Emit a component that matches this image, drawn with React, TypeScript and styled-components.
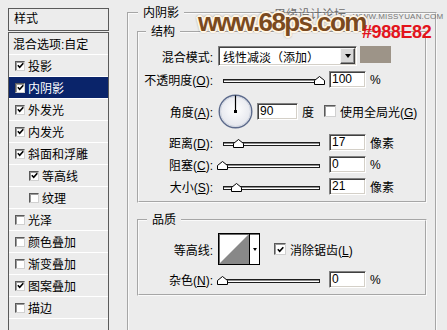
import styled, { createGlobalStyle } from 'styled-components';

const GlobalStyle = createGlobalStyle`
  html, body {
    margin: 0;
    padding: 0;
    background: #ececec;
  }
  body {
    font-family: 'Liberation Sans', 'Noto Sans CJK SC', sans-serif;
    font-size: 12px;
    color: #000;
  }
`;

const Page = styled.div`
  position: relative;
  display: flex;
  align-items: flex-start;
  width: 447px;
  height: 330px;
  overflow: hidden;
  background: #ececec;
`;

/* ---------- left: style list ---------- */

const Sidebar = styled.div`
  display: flex;
  flex-direction: column;
  flex-shrink: 0;
  width: 101px;
  margin: 8px 0 0 8px;
`;

const TitleBox = styled.div`
  box-sizing: border-box;
  height: 23px;
  margin-bottom: 1px;
  padding-left: 5px;
  border: 1px solid #5a5a5a;
  line-height: 21px;
`;

const StyleList = styled.div`
  box-sizing: border-box;
  height: 310px;
  border: 1px solid #5a5a5a;
  border-bottom: none;
`;

const StyleRow = styled.div<{ $indent: number; $active?: boolean }>`
  box-sizing: border-box;
  display: flex;
  align-items: center;
  gap: 3px;
  height: 22px;
  padding-left: ${(p) => p.$indent}px;
  border-bottom: 1px solid #fff;
  background: ${(p) => (p.$active ? '#0a246a' : 'transparent')};
  color: ${(p) => (p.$active ? '#fff' : '#000')};
  white-space: nowrap;
`;

const Box = styled.span<{ $size: number }>`
  box-sizing: border-box;
  display: inline-flex;
  align-items: center;
  justify-content: center;
  flex-shrink: 0;
  width: ${(p) => p.$size}px;
  height: ${(p) => p.$size}px;
  background: #fff;
  border: 1px solid;
  border-color: #5a5a5a #d0d0d0 #d0d0d0 #5a5a5a;
  box-shadow: inset 1px 1px 0 #9a9a9a;
`;

function Check({ checked, size = 10 }: { checked?: boolean; size?: number }) {
  return (
    <Box $size={size}>
      {checked && (
        <svg width={7} height={7} viewBox="0 0 7 7">
          <path d="M0.8 3.2 L2.7 5.2 L6.3 1.2" stroke="#000" strokeWidth="1.6" fill="none" />
        </svg>
      )}
    </Box>
  );
}

const styles = [
  { label: '混合选项:自定', plain: true },
  { label: '投影', checked: true },
  { label: '内阴影', checked: true, active: true },
  { label: '外发光', checked: true },
  { label: '内发光', checked: true },
  { label: '斜面和浮雕', checked: true },
  { label: '等高线', checked: true, sub: true },
  { label: '纹理', sub: true },
  { label: '光泽' },
  { label: '颜色叠加' },
  { label: '渐变叠加' },
  { label: '图案叠加', checked: true },
  { label: '描边' },
];

/* ---------- right: options ---------- */

const OuterGroup = styled.fieldset`
  box-sizing: border-box;
  flex-shrink: 0;
  width: 310px;
  height: 340px;
  min-width: 0;
  margin: 6px 0 0 18px;
  padding: 5px 0 0 8px;
  border: 2px groove #fafafa;
`;

const Legend = styled.legend<{ $offset: number }>`
  margin-left: ${(p) => p.$offset}px;
  padding: 0 5px;
  line-height: 14px;
  font-size: 12px;
`;

const Group = styled.fieldset<{ $top?: number }>`
  box-sizing: border-box;
  width: 290px;
  min-width: 0;
  margin: ${(p) => p.$top || 0}px 0 0 0;
  padding: 0;
  border: 2px groove #fafafa;
`;

const Stack = styled.div<{ $gap: number; $pt: number; $pb: number }>`
  display: flex;
  flex-direction: column;
  gap: ${(p) => p.$gap}px;
  padding: ${(p) => p.$pt}px 0 ${(p) => p.$pb}px 0;
`;

const Row = styled.div<{ $h: number }>`
  display: flex;
  align-items: center;
  height: ${(p) => p.$h}px;
  white-space: nowrap;
`;

const Label = styled.span`
  flex-shrink: 0;
  width: 74px;
  margin-right: 5px;
  text-align: right;
`;

const Select = styled.div`
  box-sizing: border-box;
  display: flex;
  align-items: center;
  flex-shrink: 0;
  width: 139px;
  height: 20px;
  padding: 1px 1px 1px 4px;
  background: #fff;
  border: 1px solid;
  border-color: #808080 #fff #fff #808080;
  box-shadow: inset 1px 1px 0 #404040, inset -1px -1px 0 #d4d0c8;
`;

const SelectText = styled.span`
  flex: 1;
`;

const SelectButton = styled.span`
  box-sizing: border-box;
  display: flex;
  align-items: center;
  justify-content: center;
  width: 15px;
  height: 16px;
  background: #d8d8d8;
  border: 1px solid;
  border-color: #f6f6f6 #404040 #404040 #f6f6f6;
  box-shadow: inset -1px -1px 0 #8a8a8a;
  &::after {
    content: '';
    border-left: 3.5px solid transparent;
    border-right: 3.5px solid transparent;
    border-top: 4px solid #000;
  }
`;

const Swatch = styled.div`
  align-self: flex-start;
  width: 31px;
  height: 17px;
  margin-left: 3px;
  background: #9d9488;
`;

const SliderWrap = styled.div`
  position: relative;
  flex-shrink: 0;
  width: 97px;
  height: 17px;
  margin-left: 5px;
`;

const Track = styled.div`
  box-sizing: border-box;
  height: 4px;
  margin-top: 8px;
  background: #fff;
  border: 1px solid #1e1e1e;
  box-shadow: inset 0 1px 0 #8c8c8c;
`;

const Thumb = styled.svg`
  position: absolute;
  top: 5px;
`;

function Slider({ pct }: { pct: number }) {
  return (
    <SliderWrap>
      <Track />
      <Thumb width="11" height="9" viewBox="0 0 11 9" style={{ left: pct * 97 - 6 }}>
        <path d="M0.5 8.5 V4.5 L5.5 0.5 L10.5 4.5 V8.5 Z" fill="#fff" stroke="#000" strokeWidth="1" />
      </Thumb>
    </SliderWrap>
  );
}

const Field = styled.div<{ $w: number; $ml: number }>`
  box-sizing: border-box;
  flex-shrink: 0;
  width: ${(p) => p.$w}px;
  height: 17px;
  margin-left: ${(p) => p.$ml}px;
  padding-left: 2px;
  background: #fff;
  border: 1px solid;
  border-color: #808080 #fff #fff #808080;
  box-shadow: inset 1px 1px 0 #404040, inset -1px -1px 0 #d4d0c8;
  line-height: 15px;
`;

const Unit = styled.span<{ $ml?: number }>`
  margin-left: ${(p) => p.$ml ?? 4}px;
`;

const Gap = styled.span<{ $w: number }>`
  display: inline-block;
  flex-shrink: 0;
  width: ${(p) => p.$w}px;
`;

const Dial = styled.svg`
  flex-shrink: 0;
`;

const ContourPicker = styled.div`
  box-sizing: border-box;
  display: flex;
  flex-shrink: 0;
  height: 32px;
  background: #fff;
  border: 1px solid #000;
  box-shadow: inset 1px 1px 0 #6a6a6a;
`;

const ContourArrow = styled.div`
  display: flex;
  align-items: center;
  justify-content: center;
  width: 9px;
  border-left: 1px solid #000;
  &::after {
    content: '';
    border-left: 2.5px solid transparent;
    border-right: 2.5px solid transparent;
    border-top: 3px solid #000;
  }
`;

/* ---------- watermarks over the shot ---------- */

const ForumMark = styled.span`
  position: absolute;
  left: 274px;
  top: 7px;
  font-family: 'Noto Sans CJK SC', sans-serif;
  font-size: 12px;
  line-height: 14px;
  color: #6e6e6e;
`;

const UrlMark = styled.span`
  position: absolute;
  left: 353px;
  top: 13px;
  font-family: 'Liberation Sans', sans-serif;
  font-size: 8px;
  line-height: 8px;
  letter-spacing: 0.2px;
  color: #777;
`;

const SiteMark = styled.span`
  position: absolute;
  left: 198px;
  top: 9px;
  font-family: 'Liberation Sans', sans-serif;
  font-weight: bold;
  font-size: 26px;
  line-height: 26px;
  letter-spacing: -1.6px;
  color: #7b4a1e;
  text-shadow: -1px -1px 0 #fff6e6, 1px -1px 0 #fff6e6, -1px 1px 0 #fff6e6,
    1px 1px 0 #fff6e6, 0 -2px 0 #fff6e6, 0 2px 0 #fff6e6, -2px 0 0 #fff6e6,
    2px 0 0 #fff6e6, 0 0 3px #3a2410, 0 0 3px #3a2410;
`;

const ColorNote = styled.span`
  position: absolute;
  left: 362px;
  top: 23px;
  font-family: 'Liberation Sans', sans-serif;
  font-weight: bold;
  font-size: 18px;
  line-height: 18px;
  letter-spacing: -0.4px;
  color: #e3141c;
`;

function SliderRow({ label, u, pct, value, unit }: { label: string; u: string; pct: number; value: string; unit: string }) {
  return (
    <Row $h={17}>
      <Label>
        {label}(<u>{u}</u>):
      </Label>
      <Slider pct={pct} />
      <Field $w={37} $ml={9}>{value}</Field>
      <Unit>{unit}</Unit>
    </Row>
  );
}

export default function App() {
  return (
    <>
      <GlobalStyle />
      <Page>
        <Sidebar>
          <TitleBox>样式</TitleBox>
          <StyleList>
            {styles.map((s) => (
              <StyleRow key={s.label} $indent={s.plain ? 4 : s.sub ? 20 : 6} $active={s.active}>
                {!s.plain && <Check checked={s.checked} />}
                <span>{s.label}</span>
              </StyleRow>
            ))}
          </StyleList>
        </Sidebar>

        <OuterGroup>
          <Legend $offset={1}>内阴影</Legend>
          <Group>
            <Legend $offset={7}>结构</Legend>
            <Stack $gap={5} $pt={7} $pb={6}>
              <Row $h={20}>
                <Label>混合模式:</Label>
                <Select>
                  <SelectText>线性减淡（添加）</SelectText>
                  <SelectButton />
                </Select>
                <Swatch />
              </Row>
              <SliderRow label="不透明度" u="O" pct={1} value="100" unit="%" />
              <Row $h={36}>
                <Label>
                  角度(<u>A</u>):
                </Label>
                <Dial width="35" height="35" viewBox="0 0 35 35">
                  <defs>
                    <radialGradient id="dialFill" cx="50%" cy="45%" r="55%">
                      <stop offset="0" stopColor="#ffffff" />
                      <stop offset="1" stopColor="#e3e5ec" />
                    </radialGradient>
                  </defs>
                  <circle cx="17.5" cy="17.5" r="16.3" fill="url(#dialFill)" stroke="#5d6b8c" strokeWidth="1.4" />
                  <circle cx="17.5" cy="17.5" r="15" fill="none" stroke="#c9cfdc" strokeWidth="0.8" />
                  <line x1="17.5" y1="17.5" x2="17.5" y2="1.5" stroke="#000" strokeWidth="1.2" />
                  <rect x="16" y="16" width="3" height="3" fill="#000" />
                </Dial>
                <Field $w={41} $ml={4}>90</Field>
                <Unit>度</Unit>
                <Gap $w={10} />
                <Check size={12} />
                <Unit>
                  使用全局光(<u>G</u>)
                </Unit>
              </Row>
              <SliderRow label="距离" u="D" pct={0.16} value="17" unit="像素" />
              <SliderRow label="阻塞" u="C" pct={0} value="0" unit="%" />
              <SliderRow label="大小" u="S" pct={0.14} value="21" unit="像素" />
            </Stack>
          </Group>

          <Group $top={10}>
            <Legend $offset={8}>品质</Legend>
            <Stack $gap={6} $pt={6} $pb={6}>
              <Row $h={32}>
                <Label>等高线:</Label>
                <ContourPicker>
                  <svg width="30" height="30" viewBox="0 0 30 30">
                    <polygon points="0,30 30,0 30,30" fill="#888" />
                  </svg>
                  <ContourArrow />
                </ContourPicker>
                <Gap $w={14} />
                <Check checked size={12} />
                <Unit>
                  消除锯齿(<u>L</u>)
                </Unit>
              </Row>
              <SliderRow label="杂色" u="N" pct={0} value="0" unit="%" />
            </Stack>
          </Group>
        </OuterGroup>

        <ForumMark>思缘设计论坛</ForumMark>
        <UrlMark>WWW.MISSYUAN.COM</UrlMark>
        <SiteMark>www.68ps.com</SiteMark>
        <ColorNote>#988E82</ColorNote>
      </Page>
    </>
  );
}
